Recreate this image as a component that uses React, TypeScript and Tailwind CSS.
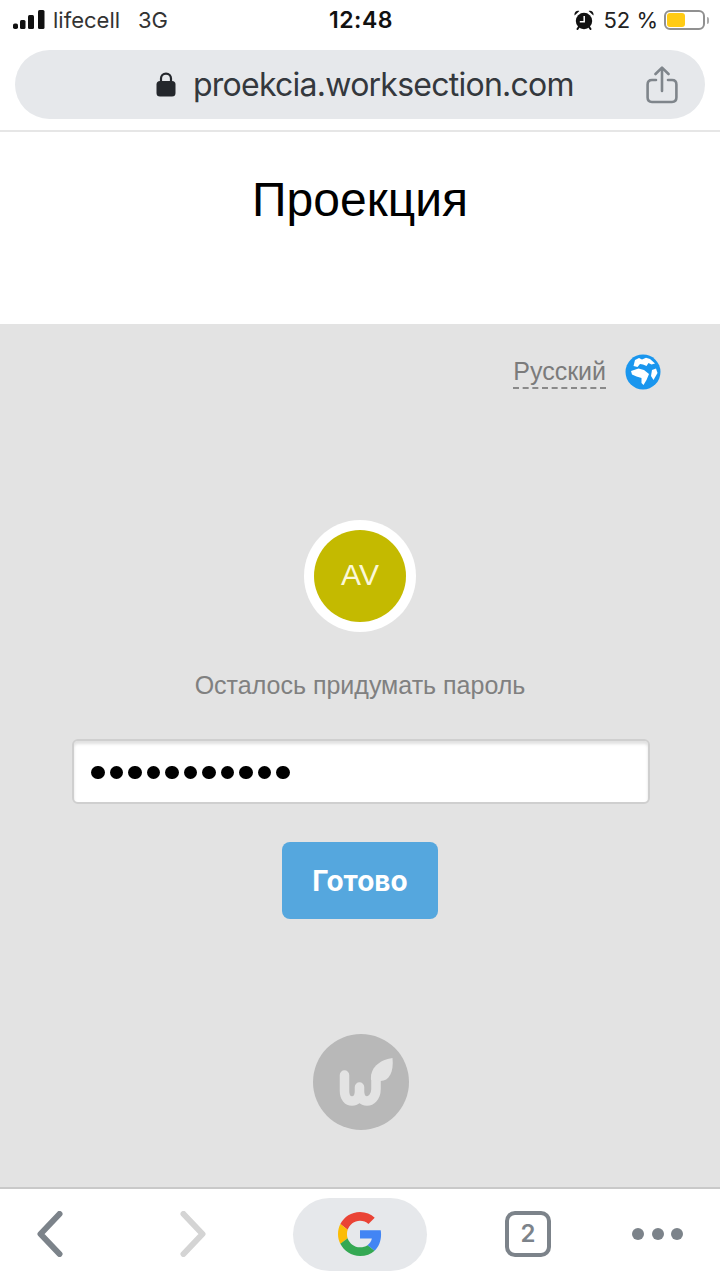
const sans = "font-['Inter','Liberation_Sans',sans-serif]";
const arial = "font-['Liberation_Sans',Arial,sans-serif]";

function Signal() {
  return (
    <svg width="32" height="19" viewBox="0 0 32 19" className="shrink-0 mb-[2px]">
      <rect x="0" y="13.5" width="5" height="5.5" rx="1.8" fill="#111" />
      <rect x="7" y="10" width="5.5" height="9" rx="1.5" fill="#111" />
      <rect x="15" y="5" width="6" height="14" rx="1.5" fill="#111" />
      <rect x="25" y="0" width="6.5" height="19" rx="1.5" fill="#111" />
    </svg>
  );
}

function Alarm() {
  return (
    <svg width="20" height="20" viewBox="0 0 20 20" className="shrink-0">
      <circle cx="10" cy="11" r="8.2" fill="#111" />
      <path d="M0.6 5.4 L5.4 0.9 C2.6 -0.2 -0.2 2.2 0.6 5.4Z M19.4 5.4 L14.6 0.9 C17.4 -0.2 20.2 2.2 19.4 5.4Z" fill="#111" />
      <path d="M3.5 19 L5.5 16 M16.5 19 L14.5 16" stroke="#111" strokeWidth="2" strokeLinecap="round" />
      <path d="M10.2 6 V11.8 H5.8" stroke="#fff" strokeWidth="1.5" fill="none" />
    </svg>
  );
}

function Lock() {
  return (
    <svg width="20" height="25" viewBox="0 0 20 25" className="shrink-0">
      <path d="M5 10 V6.5 C5 3.6 7 1.6 10 1.6 C13 1.6 15 3.6 15 6.5 V10" fill="none" stroke="#24272c" strokeWidth="2.2" />
      <rect x="0.5" y="9" width="19" height="15.5" rx="3.5" fill="#24272c" />
    </svg>
  );
}

function Share() {
  return (
    <svg width="32" height="38" viewBox="0 0 32 38" fill="none" stroke="#7f858b" strokeWidth="2.6" strokeLinecap="round" strokeLinejoin="round">
      <path d="M10 14 H6 C3.2 14 1.6 15.6 1.6 18.4 V31.6 C1.6 34.4 3.2 36 6 36 H26 C28.8 36 30.4 34.4 30.4 31.6 V18.4 C30.4 15.6 28.8 14 26 14 H22" />
      <path d="M16 25 V2 M9.5 8 L16 1.6 L22.5 8" />
    </svg>
  );
}

function Globe() {
  return (
    <svg width="36" height="36" viewBox="0 0 36 36" className="shrink-0">
      <circle cx="18" cy="18" r="17.5" fill="#1a96ee" />
      <path d="M10 6 L14 4 L17 5.5 L21 3.8 L25 5 L30 9.5 L26.5 10.5 L23.5 9 L21.5 12 L18 10.5 L15 10 L12.5 13 L8.5 12Z" fill="#fff" />
      <path d="M6 17 L13.5 14.5 L19 16 L24 20 L21.5 26 L18.5 31 L16.5 29 L16.5 24 L11.5 22.5 L7 20.5Z" fill="#fff" />
      <path d="M27 16 L31 14.5 L32.5 19 L28.5 26 L26 22Z" fill="#fff" />
    </svg>
  );
}

function WsLogo() {
  return (
    <svg width="96" height="96" viewBox="0 0 96 96" className="shrink-0">
      <circle cx="48" cy="48" r="48" fill="#b8b8b8" />
      <path
        d="M31.5 41 V57 C31.5 63.5 35 67 39 67 C43 67 46.5 63.5 46.5 57 V53 M46.5 53 V57 C46.5 63.5 50 67 54 67 C58 67 63 63 63 55 V42"
        fill="none"
        stroke="#e3e3e3"
        strokeWidth="9.5"
        strokeLinecap="round"
        strokeLinejoin="round"
      />
      <path d="M58 46 C57 34 66 26 79.5 24 C81 38 76 47 67.5 47 Z" fill="#e3e3e3" />
    </svg>
  );
}

function GoogleG() {
  return (
    <svg width="44" height="44" viewBox="0 0 48 48">
      <path fill="#EA4335" d="M24 9.5c3.54 0 6.71 1.22 9.21 3.6l6.85-6.85C35.9 2.38 30.47 0 24 0 14.62 0 6.51 5.38 2.56 13.22l7.98 6.19C12.43 13.72 17.74 9.5 24 9.5z" />
      <path fill="#4285F4" d="M46.98 24.55c0-1.57-.15-3.09-.38-4.55H24v9.02h12.94c-.58 2.96-2.26 5.48-4.78 7.18l7.73 6c4.51-4.18 7.09-10.36 7.09-17.65z" />
      <path fill="#FBBC05" d="M10.53 28.59c-.48-1.45-.76-2.99-.76-4.59s.27-3.14.76-4.59l-7.98-6.19C.92 16.46 0 20.12 0 24c0 3.88.92 7.54 2.56 10.78l7.97-6.19z" />
      <path fill="#34A853" d="M24 48c6.48 0 11.93-2.13 15.89-5.81l-7.73-6c-2.15 1.45-4.92 2.3-8.16 2.3-6.26 0-11.57-4.22-13.47-9.91l-7.98 6.19C6.51 42.62 14.62 48 24 48z" />
    </svg>
  );
}

function Chevron({ dir, color }: { dir: "left" | "right"; color: string }) {
  return (
    <svg width="26" height="46" viewBox="0 0 26 46" fill="none" stroke={color} strokeWidth="6" strokeLinecap="round" strokeLinejoin="round">
      <path d={dir === "left" ? "M22.5 3 L3.5 23 L22.5 43" : "M3.5 3 L22.5 23 L3.5 43"} />
    </svg>
  );
}

export default function App() {
  const dots = Array.from({ length: 11 });
  return (
    <div className={`w-[720px] h-[1280px] flex flex-col bg-white overflow-hidden ${sans}`}>
      {/* Status bar */}
      <div className="h-[50px] shrink-0 flex items-center pb-[10px] text-[#1a1a1a]">
        <div className="flex-1 flex items-center pl-[13px]">
          <Signal />
          <span className="ml-[8px] text-[22px] leading-none text-[#333]">lifecell</span>
          <span className="ml-[18px] text-[22px] leading-none text-[#333]">3G</span>
        </div>
        <span className="text-[23px] leading-none font-semibold tracking-[0.5px] text-[#111]">12:48</span>
        <div className="flex-1 flex items-center justify-end pr-[11px]">
          <Alarm />
          <span className="ml-[9px] text-[22px] leading-none text-[#222]">52 %</span>
          <div className="ml-[6px] w-[41px] h-[20px] rounded-[6px] border-2 border-[#909090] p-[1px] flex">
            <div className="w-[18px] rounded-[3px] bg-[#ffcb14]" />
          </div>
          <div className="w-[2px] h-[7px] ml-[2px] rounded-r-full bg-[#aaa]" />
        </div>
      </div>

      {/* Address bar */}
      <div className="h-[69px] shrink-0 mx-[15px] rounded-full bg-[#e6e8eb] flex items-center pl-[141px] pr-[27px]">
        <Lock />
        <span className="ml-[17px] text-[32px] leading-none tracking-[-0.75px] text-[#34383d] flex-1 whitespace-nowrap">proekcia.worksection.com</span>
        <Share />
      </div>
      <div className="h-[2px] mt-[11px] shrink-0 bg-[#e6e6e6]" />

      {/* Title */}
      <div className="h-[192px] shrink-0 flex justify-center pt-[41px]">
        <h1 className={`text-[48px] leading-[54px] font-normal text-black ${arial}`}>Проекция</h1>
      </div>

      {/* Login */}
      <div className="flex-1 bg-[#e3e3e3] flex flex-col items-center">
        <div className="self-stretch flex justify-end items-center pt-[30px] pr-[59px]">
          <span className={`text-[25px] leading-[31px] text-[#7b7b7b] border-b-2 border-dashed border-[#8a8a8a] ${arial}`}>Русский</span>
          <div className="ml-[19px]">
            <Globe />
          </div>
        </div>

        <div className="mt-[130px] w-[112px] h-[112px] rounded-full bg-white flex items-center justify-center">
          <div className={`w-[92px] h-[92px] pb-[3px] rounded-full bg-[#c4ba00] flex items-center justify-center text-[30px] text-[#fbf8d8] ${arial}`}>AV</div>
        </div>

        <p className={`mt-[37px] text-[25px] leading-[32px] text-[#808080] ${arial}`}>Осталось придумать пароль</p>

        <div className="mt-[38px] ml-[2px] w-[578px] h-[65px] rounded-[6px] bg-white border-2 border-[#cfcfcf] shadow-[inset_0_3px_3px_rgba(0,0,0,0.12)] flex items-center pl-[17px] pt-[2px] gap-[5px]">
          {dots.map((_, i) => (
            <div key={i} className="w-[13.5px] h-[13.5px] rounded-full bg-black" />
          ))}
        </div>

        <button className="mt-[38px] w-[156px] h-[77px] rounded-[8px] bg-[#55a7de] text-white text-[28px] font-bold flex items-center justify-center">
          Готово
        </button>

        <div className="mt-[115px] ml-[2px]">
          <WsLogo />
        </div>
      </div>

      {/* Bottom toolbar */}
      <div className="h-[93px] shrink-0 bg-white border-t-2 border-[#c9c9c9] flex items-center pb-[1px]">
        <div className="ml-[37px]">
          <Chevron dir="left" color="#7c838a" />
        </div>
        <div className="ml-[117px]">
          <Chevron dir="right" color="#d4d4d4" />
        </div>
        <div className="ml-[87px] w-[134px] h-[73px] rounded-full bg-[#e6e8eb] flex items-center justify-center">
          <GoogleG />
        </div>
        <div className="ml-[78px] w-[46px] h-[46px] rounded-[10px] border-[4px] border-[#7c838a] flex items-center justify-center text-[24px] font-semibold text-[#7c838a]">
          2
        </div>
        <div className="ml-[81px] flex gap-[7.5px]">
          <div className="w-[12px] h-[12px] rounded-full bg-[#7c838a]" />
          <div className="w-[12px] h-[12px] rounded-full bg-[#7c838a]" />
          <div className="w-[12px] h-[12px] rounded-full bg-[#7c838a]" />
        </div>
      </div>
    </div>
  );
}
